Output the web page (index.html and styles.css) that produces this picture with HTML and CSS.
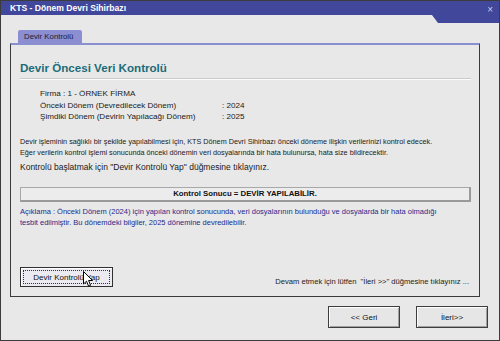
FILE: index.html
```html
<!DOCTYPE html>
<html lang="tr">
<head>
<meta charset="utf-8">
<link rel="stylesheet" href="styles.css">
</head>
<body>
<div class="window">
  <div class="titlebar">
    <span class="title">KTS - Dönem Devri Sihirbazı</span>
    <span class="close">×</span>
  </div>
  <div class="body">
    <div class="tabs"><div class="tab">Devir Kontrolü</div></div>
    <div class="panel">
      <h1 class="heading">Devir Öncesi Veri Kontrolü</h1>
      <div class="info">
        <div class="row">Firma : 1 - ÖRNEK FİRMA</div>
        <div class="row"><span class="lbl">Önceki Dönem (Devredilecek Dönem)</span><span>: 2024</span></div>
        <div class="row"><span class="lbl">Şimdiki Dönem (Devirin Yapılacağı Dönem)</span><span>: 2025</span></div>
      </div>
      <p class="desc">Devir işleminin sağlıklı bir şekilde yapılabilmesi için, KTS Dönem Devri Sihirbazı önceki döneme ilişkin verilerinizi kontrol edecek.<br>Eğer verilerin kontrol işlemi sonucunda önceki dönemin veri dosyalarında bir hata bulunursa, hata size bildirecektir.</p>
      <p class="start">Kontrolü başlatmak için "Devir Kontrolü Yap" düğmesine tıklayınız.</p>
      <div class="result">Kontrol Sonucu = DEVİR YAPILABİLİR.</div>
      <p class="note">Açıklama : Önceki Dönem (2024) için yapılan kontrol sonucunda, veri dosyalarının bulunduğu ve dosyalarda bir hata olmadığı<br>tesbit edilmiştir. Bu dönemdeki bilgiler, 2025 dönemine devredilebilir.</p>
      <div class="footer">
        <div class="btn-wrap">
          <button class="btn focus"><span class="focus-ring">Devir Kontrolü Yap</span></button>
          <svg class="cursor" width="11" height="17" viewBox="0 0 11 17"><path d="M0.5 0.5 L0.5 13 L3.5 10.2 L5.6 15.2 L7.6 14.3 L5.6 9.5 L9.6 9.5 Z" fill="#fff" stroke="#000" stroke-width="1"/></svg>
        </div>
        <span class="hint">Devam etmek için lütfen &nbsp;"İleri &gt;&gt;" düğmesine tıklayınız ...</span>
      </div>
    </div>
    <div class="nav">
      <button class="btn nav-btn">&lt;&lt; Geri</button>
      <button class="btn nav-btn">İleri&gt;&gt;</button>
    </div>
  </div>
</div>
</body>
</html>
```
FILE: styles.css
```css
* { box-sizing: border-box; }
html, body { margin: 0; padding: 0; }
body {
  width: 500px;
  height: 341px;
  overflow: hidden;
  font-family: "Liberation Sans", Arial, sans-serif;
  color: #1a1a1a;
}
.window {
  position: relative;
  width: 500px;
  height: 341px;
  border: 1px solid #3c3c3c;
  background: #e8e8e8;
  display: flex;
  flex-direction: column;
}
.titlebar {
  height: 22px;
  background: #41479b;
  color: #fff;
  display: flex;
  align-items: flex-start;
  justify-content: space-between;
  padding: 2px 6px 0 9px;
  clip-path: polygon(0 0, 100% 0, 100% 22px, 437px 22px, 431px 14px, 0 14px);
}
.title {
  font-weight: bold;
  font-size: 8.6px;
  line-height: 11px;
}
.close {
  font-size: 10px;
  line-height: 11px;
  color: #c9cbe6;
  margin-top: 1px;
}
.body {
  flex: 1;
  padding: 7px 19px 0 9px;
  display: flex;
  flex-direction: column;
}
.tabs { display: flex; padding-left: 8px; }
.tab {
  background: #8b8fd2;
  color: #1b1b3a;
  font-size: 7.8px;
  height: 13px;
  line-height: 14px;
  padding: 0 6px;
  border-radius: 2px 2px 0 0;
  width: 64px;
}
.panel {
  height: 254px;
  border: 1px solid #3a3a3a;
  border-top: 2px solid #8a8fd0;
  padding: 16px 8px 0 9px;
  display: flex;
  flex-direction: column;
}
.heading {
  margin: 0;
  font-size: 11.6px;
  font-weight: bold;
  color: #1b6c79;
  line-height: 14px;
  padding-bottom: 3px;
  border-bottom: 1px solid #cbcbcb;
  box-shadow: 0 1px 0 #fbfbfb;
}
.info {
  margin-top: 9px;
  padding-left: 20px;
  font-size: 8.1px;
  line-height: 11.5px;
}
.row { display: flex; }
.lbl { width: 182px; }
.desc {
  margin: 13px 0 0;
  font-size: 7.25px;
  line-height: 11px;
}
.start {
  margin: 4px 0 0;
  font-size: 8.5px;
  line-height: 11px;
}
.result {
  margin-top: 14px;
  height: 15px;
  background: #ececec;
  border-top: 1px solid #a8a8a8;
  border-left: 1px solid #a8a8a8;
  border-right: 2px solid #9a9a9a;
  border-bottom: 2px solid #9a9a9a;
  text-align: center;
  font-weight: bold;
  font-size: 7.8px;
  line-height: 12px;
  color: #111;
}
.note {
  margin: 4px 0 0;
  font-size: 7.5px;
  line-height: 11px;
  color: #1f2a8c;
}
.footer {
  margin-top: auto;
  margin-bottom: 9px;
  display: flex;
  align-items: flex-end;
  justify-content: space-between;
}
.btn-wrap { position: relative; }
.btn {
  font-family: "Liberation Sans", Arial, sans-serif;
  font-size: 8px;
  color: #111;
  background: #ececec;
  border: 1px solid #303030;
  box-shadow: inset 1px 1px 0 #fff;
  padding: 0;
  margin: 0;
}
.btn.focus {
  width: 93px;
  height: 20px;
  padding: 2px;
  background: #eaeaf0;
}
.focus-ring {
  display: block;
  height: 100%;
  border: 1px dotted #333;
  line-height: 14px;
}
.cursor {
  position: absolute;
  left: 63px;
  top: 5px;
}
.hint {
  font-size: 7.6px;
  line-height: 10px;
  margin-right: 2px;
  margin-bottom: 0;
}
.nav {
  display: flex;
  justify-content: flex-end;
  gap: 16px;
  margin-top: 9px;
  padding-right: 0;
  margin-right: -8px;
}
.nav-btn {
  width: 72px;
  height: 22px;
  border: 1px solid #3e3e3e;
  background: #e6e6e6;
  box-shadow: inset 1px 1px 0 #fcfcfc, inset -1px -1px 0 #a0a0a0;
}
```
